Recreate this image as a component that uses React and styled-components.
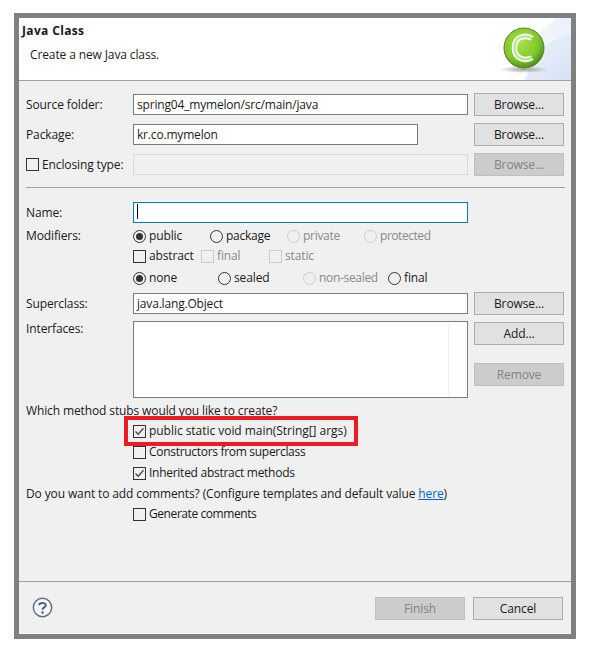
import styled, { createGlobalStyle } from 'styled-components';

const GlobalStyle = createGlobalStyle`
  html, body {
    margin: 0;
    padding: 0;
    background: #ffffff;
  }
  body {
    font-family: "Open Sans", "Noto Sans", "Liberation Sans", sans-serif;
    font-size: 12px;
    letter-spacing: -0.12px;
    color: #1a1a1a;
  }
`;

const Page = styled.div`
  width: 589px;
  height: 653px;
  padding: 13px 13px 14px 14px;
  box-sizing: border-box;
`;

const Dialog = styled.div`
  position: relative;
  width: 562px;
  height: 626px;
  box-sizing: border-box;
  border: 5px solid #808080;
  background: #f0f0f0;
  display: flex;
  flex-direction: column;
`;

const Banner = styled.div`
  height: 62px;
  flex: none;
  background: #ffffff;
  border-bottom: 1px solid #a0a0a0;
  display: flex;
  justify-content: space-between;
  padding-left: 3px;
`;

const BannerTitle = styled.div`
  font-weight: 700;
  line-height: 16px;
  margin-top: 5px;
  letter-spacing: 0.35px;
`;

const BannerText = styled.div`
  line-height: 16px;
  margin-top: 8px;
  margin-left: 8px;
`;

const Content = styled.div`
  flex: 1;
  padding: 12px 7px 0 7px;
  display: flex;
  flex-direction: column;
`;

const Label = styled.div`
  line-height: 16px;
  align-self: ${(p) => (p.$top ? 'start' : 'center')};
`;

const Field = styled.div`
  box-sizing: border-box;
  height: 21px;
  width: ${(p) => p.$width || '335px'};
  border: 1px solid ${(p) => (p.$focus ? '#0078d7' : p.$disabled ? '#d9d9d9' : '#7a7a7a')};
  background: ${(p) => (p.$disabled ? '#f0f0f0' : '#ffffff')};
  padding-left: 3px;
  line-height: 19px;
  letter-spacing: -0.18px;
  white-space: nowrap;
`;

const Caret = styled.span`
  display: block;
  width: 1px;
  height: 15px;
  margin-top: 1px;
  background: #000000;
`;

const Button = styled.div`
  box-sizing: border-box;
  width: 90px;
  height: 23px;
  border: 1px solid ${(p) => (p.$disabled ? '#bfbfbf' : '#adadad')};
  background: ${(p) => (p.$disabled ? '#cccccc' : '#e1e1e1')};
  color: ${(p) => (p.$disabled ? '#838383' : '#1a1a1a')};
  text-align: center;
  line-height: 21px;
`;

const FieldRow = styled.div`
  display: grid;
  grid-template-columns: 101px 335px 90px;
  column-gap: 6px;
  align-items: center;
  height: 23px;
  margin-bottom: ${(p) => p.$gap ?? 7}px;
`;

const Divider = styled.div`
  height: 1px;
  background: #a0a0a0;
  margin: 11px 0 13px;
  width: 539px;
`;

const Choices = styled.div`
  display: flex;
  align-items: center;
  height: 16px;
`;

const OptionRow = styled.div`
  display: grid;
  grid-template-columns: 101px 1fr;
  column-gap: 6px;
  align-items: center;
  height: 16px;
  margin-bottom: ${(p) => p.$gap ?? 5}px;
`;

const Option = styled.div`
  display: flex;
  align-items: center;
  width: ${(p) => (p.$width ? `${p.$width}px` : 'auto')};
  gap: 3px;
  color: ${(p) => (p.$disabled ? '#8a8a8a' : 'inherit')};
  letter-spacing: ${(p) => p.$track ?? -0.12}px;
  line-height: 16px;
  white-space: nowrap;
`;

const RadioMark = styled.span`
  box-sizing: border-box;
  width: 13px;
  height: 13px;
  flex: none;
  border-radius: 50%;
  border: 1px solid ${(p) => (p.$disabled ? '#cccccc' : '#333333')};
  display: flex;
  align-items: center;
  justify-content: center;
  &::after {
    content: '';
    width: 7px;
    height: 7px;
    border-radius: 50%;
    background: ${(p) => (p.$checked ? '#333333' : 'transparent')};
  }
`;

const CheckMark = styled.span`
  box-sizing: border-box;
  width: 13px;
  height: 13px;
  flex: none;
  border: 1px solid ${(p) => (p.$disabled ? '#cccccc' : '#333333')};
  display: flex;
  align-items: center;
  justify-content: center;
`;

const ListBox = styled.div`
  box-sizing: border-box;
  height: 77px;
  border: 1px solid #7a7a7a;
  background: #ffffff;
  display: flex;
  justify-content: flex-end;
`;

const ScrollEdge = styled.div`
  width: 18px;
  margin: 1px 0;
  border-left: 1px solid #e8f0fb;
`;

const ListRow = styled.div`
  display: grid;
  grid-template-columns: 101px 335px 90px;
  column-gap: 6px;
  align-items: start;
  margin-bottom: 5px;
`;

const SideButtons = styled.div`
  display: flex;
  flex-direction: column;
  gap: 18px;
  padding-top: 1px;
`;

const Section = styled.div`
  line-height: 16px;
  margin-bottom: ${(p) => p.$gap ?? 4}px;
`;

const Stub = styled.div`
  margin-left: 107px;
  margin-bottom: ${(p) => p.$gap ?? 5}px;
`;

const HelpLink = styled.a`
  color: #0066cc;
  text-decoration: underline;
`;

const Highlight = styled.div`
  position: absolute;
  left: 105px;
  top: 398px;
  width: 234px;
  height: 30px;
  box-sizing: border-box;
  border: 4px solid #ed1c24;
`;

const Footer = styled.div`
  flex: none;
  box-sizing: border-box;
  height: 53px;
  padding: 2px 8px 0 12px;
  border-top: 1px solid #a0a0a0;
  border-bottom: 1px solid #ffffff;
  display: flex;
  align-items: center;
`;

const HelpSlot = styled.div`
  display: flex;
  margin: 0 0 3px 1px;
`;

const FooterActions = styled.div`
  margin-left: auto;
  display: flex;
  gap: 8px;
`;

const Tick = () => (
  <svg width="11" height="11" viewBox="0 0 11 11">
    <path d="M1.5 5.5 L4.2 8.2 L9.5 2.2" fill="none" stroke="#444444" strokeWidth="1.3" />
  </svg>
);

const Radio = ({ checked, disabled, width, track, children }) => (
  <Option $width={width} $disabled={disabled} $track={track}>
    <RadioMark $checked={checked} $disabled={disabled} />
    {children}
  </Option>
);

const Check = ({ checked, disabled, width, track, children }) => (
  <Option $width={width} $disabled={disabled} $track={track}>
    <CheckMark $disabled={disabled}>{checked && <Tick />}</CheckMark>
    {children}
  </Option>
);

const BannerArt = () => (
  <svg width="72" height="62" viewBox="0 0 72 62">
    <defs>
      <linearGradient id="sweep" x1="0" y1="1" x2="1" y2="0">
        <stop offset="0" stopColor="#ffffff" />
        <stop offset="1" stopColor="#eaf0fa" />
      </linearGradient>
      <linearGradient id="band" x1="0" y1="0" x2="1" y2="1">
        <stop offset="0" stopColor="#eef3fb" />
        <stop offset="1" stopColor="#d8e2f5" />
      </linearGradient>
      <radialGradient id="ball" cx="0.42" cy="0.36" r="0.68">
        <stop offset="0" stopColor="#a8e04a" />
        <stop offset="0.65" stopColor="#7fc92a" />
        <stop offset="1" stopColor="#3f8a16" />
      </radialGradient>
      <radialGradient id="shadow" cx="0.5" cy="0.5" r="0.5">
        <stop offset="0" stopColor="#85857a" stopOpacity="0.75" />
        <stop offset="1" stopColor="#85857a" stopOpacity="0" />
      </radialGradient>
    </defs>
    <path d="M58 0 C42 12 14 38 1 62 L72 62 L72 0 Z" fill="url(#sweep)" />
    <path d="M72 17 C60 19 50 24 42 31 C36 40 30 50 26 62 L72 62 Z" fill="url(#band)" />
    <ellipse cx="25" cy="51.5" rx="25" ry="3.5" fill="url(#shadow)" />
    <circle cx="25" cy="30" r="20" fill="url(#ball)" stroke="#667a35" strokeWidth="1" />
    <path
      d="M33 20.5 C28 17 15.5 17 15.5 30 C15.5 42 28 43 33 39.5"
      fill="none"
      stroke="#ffffff"
      strokeWidth="5.5"
    />
    <path
      d="M33 20.5 C28 17 15.5 17 15.5 30 C15.5 42 28 43 33 39.5"
      fill="none"
      stroke="#b7e58a"
      strokeWidth="2.2"
    />
  </svg>
);

const HelpIcon = () => (
  <svg width="21" height="21" viewBox="0 0 22 22">
    <circle cx="11" cy="11" r="9.6" fill="#f4f6fa" stroke="#5a6b8c" strokeWidth="1.5" />
    <path
      d="M7.6 8.6 C7.6 5.4 14.4 5.4 14.4 8.6 C14.4 11 11 10.8 11 13.4"
      fill="none"
      stroke="#4a5f86"
      strokeWidth="2.1"
    />
    <circle cx="11" cy="16.2" r="1.3" fill="#4a5f86" />
  </svg>
);

const App = () => {
  return (
    <Page>
      <GlobalStyle />
      <Dialog>
        <Banner>
          <div>
            <BannerTitle>Java Class</BannerTitle>
            <BannerText>Create a new Java class.</BannerText>
          </div>
          <BannerArt />
        </Banner>

        <Content>
          <FieldRow>
            <Label>Source folder:</Label>
            <Field>spring04_mymelon/src/main/java</Field>
            <Button>Browse...</Button>
          </FieldRow>
          <FieldRow>
            <Label>Package:</Label>
            <Field $width="285px">kr.co.mymelon</Field>
            <Button>Browse...</Button>
          </FieldRow>
          <FieldRow $gap={0}>
            <Label>
              <Check>Enclosing type:</Check>
            </Label>
            <Field $disabled />
            <Button $disabled>Browse...</Button>
          </FieldRow>

          <Divider />

          <FieldRow $gap={4}>
            <Label>Name:</Label>
            <Field $focus>
              <Caret />
            </Field>
          </FieldRow>
          <OptionRow $gap={4}>
            <Label>Modifiers:</Label>
            <Choices>
              <Radio checked width={77}>public</Radio>
              <Radio width={77} track={-0.25}>package</Radio>
              <Radio disabled width={77} track={-0.3}>private</Radio>
              <Radio disabled track={-0.45}>protected</Radio>
            </Choices>
          </OptionRow>
          <OptionRow $gap={6}>
            <span />
            <Choices>
              <Check width={68}>abstract</Check>
              <Check disabled width={68}>final</Check>
              <Check disabled>static</Check>
            </Choices>
          </OptionRow>
          <OptionRow $gap={6}>
            <span />
            <Choices>
              <Radio checked width={85}>none</Radio>
              <Radio width={85}>sealed</Radio>
              <Radio disabled width={85} track={-0.32}>non-sealed</Radio>
              <Radio>final</Radio>
            </Choices>
          </OptionRow>
          <FieldRow $gap={6}>
            <Label>Superclass:</Label>
            <Field>java.lang.Object</Field>
            <Button>Browse...</Button>
          </FieldRow>
          <ListRow>
            <Label $top>Interfaces:</Label>
            <ListBox>
              <ScrollEdge />
            </ListBox>
            <SideButtons>
              <Button>Add...</Button>
              <Button $disabled>Remove</Button>
            </SideButtons>
          </ListRow>

          <Section>Which method stubs would you like to create?</Section>
          <Stub>
            <Check checked track={-0.04}>public static void main(String[] args)</Check>
          </Stub>
          <Stub>
            <Check track={-0.3}>Constructors from superclass</Check>
          </Stub>
          <Stub>
            <Check checked track={-0.27}>Inherited abstract methods</Check>
          </Stub>
          <Section>
            Do you want to add comments? (Configure templates and default value{' '}
            <HelpLink>here</HelpLink>)
          </Section>
          <Stub>
            <Check track={-0.42}>Generate comments</Check>
          </Stub>
        </Content>

        <Footer>
          <HelpSlot>
            <HelpIcon />
          </HelpSlot>
          <FooterActions>
            <Button $disabled>Finish</Button>
            <Button>Cancel</Button>
          </FooterActions>
        </Footer>
        <Highlight />
      </Dialog>
    </Page>
  );
};

export default App;
